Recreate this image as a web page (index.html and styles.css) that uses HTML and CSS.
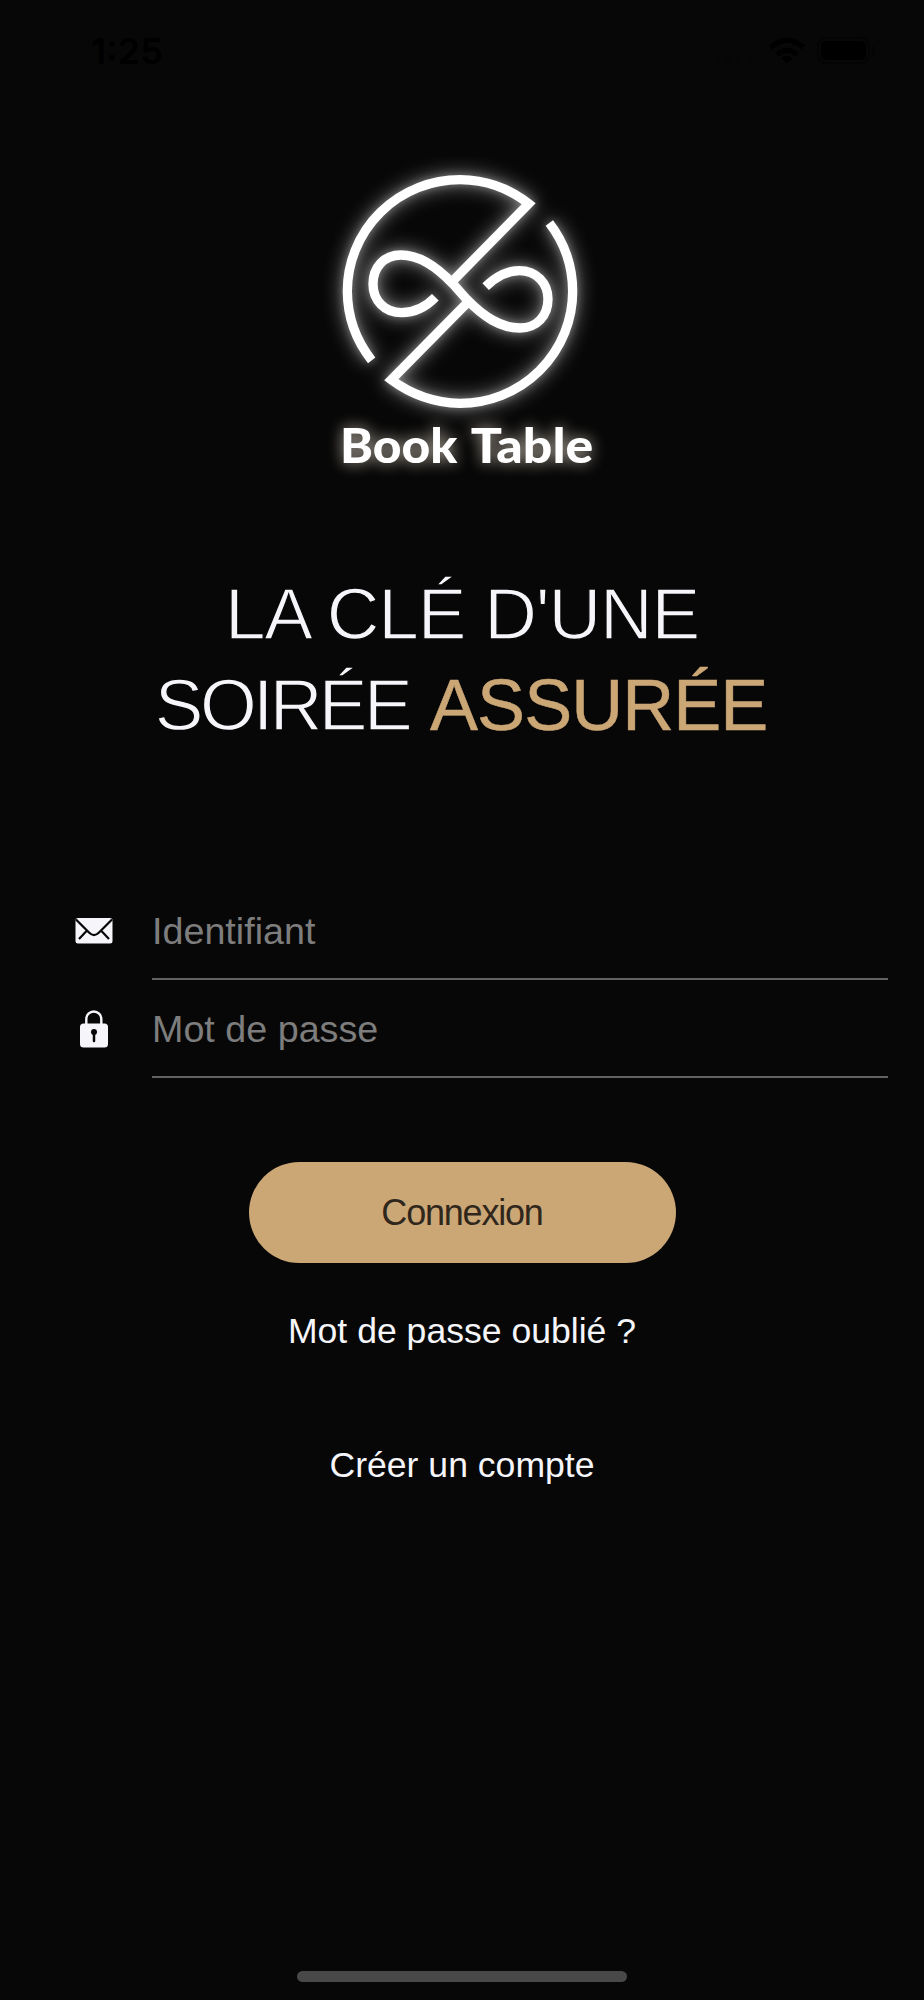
FILE: index.html
```html
<!DOCTYPE html>
<html lang="fr">
<head>
    <meta charset="UTF-8">
    <meta name="viewport" content="width=device-width, initial-scale=1.0">
    <title>Book Table</title>
    <link rel="stylesheet" href="styles.css">
</head>
<body>
    <header class="status-bar">
        <span class="time">1:25</span>
        <div class="status-icons">
            <svg class="signal" width="44" height="8" viewBox="0 0 44 8">
                <circle cx="4" cy="4" r="3"/><circle cx="15" cy="4" r="3"/><circle cx="26" cy="4" r="3"/><circle cx="37" cy="4" r="3"/>
            </svg>
            <svg class="wifi" width="38" height="27" viewBox="0 0 38 27">
                <path d="M19 26.500L13.500 21Q19 16.500 24.500 21Z"/>
                <path d="M9 17.500Q19 9 29 17.500M2.500 10.500Q19-4 35.500 10.500" fill="none" stroke="#000" stroke-width="5"/>
            </svg>
            <svg class="battery" width="60" height="27" viewBox="0 0 60 27">
                <rect x="1" y="1" width="51" height="25" rx="8" fill="none" stroke="#040404" stroke-width="2"/>
                <rect x="4" y="4" width="45" height="19" rx="5"/>
                <path d="M55 9q3 1.500 3 4.500t-3 4.500z" fill="#040404"/>
            </svg>
        </div>
    </header>

    <main class="login">
        <svg class="logo" viewBox="0 0 870 1020">
            <g class="emblem">
                <path d="M155 631A338 338 0 0 1 82 424A338 335 0 0 1 420 89A338 338 0 0 1 626 161L399 392"/>
                <path d="M688 219A338 338 0 0 1 758 424A338 336 0 0 1 420 760A360 360 0 0 1 214 689L444 456"/>
                <path d="M497 410C530 378 562 362 598 362C650 362 684 400 684 447C684 498 650 534 600 534C540 534 490 500 440 448L399 402C350 350 300 315 243 315C192 315 159 352 159 402C159 452 195 488 245 488C282 488 315 474 346 442"/>
            </g>
            <text class="brand" x="60" y="940" textLength="352" lengthAdjust="spacingAndGlyphs">Book</text>
            <text class="brand" x="452" y="940" textLength="368" lengthAdjust="spacingAndGlyphs">Table</text>
        </svg>

        <h1 class="title">
            <span class="line light first">LA CLÉ D'UNE</span>
            <span class="line"><span class="light second">SOIRÉE</span> <span class="gold">ASSURÉE</span></span>
        </h1>

        <form class="form">
            <label class="field">
                <svg width="38" height="38" viewBox="0 0 38 38">
                    <rect x="0.500" y="6" width="37" height="25.500" rx="2.500" fill="#f5f5fa"/>
                    <path d="M1 7.500L14 20.500Q19 25.500 24 20.500L37 7.500M12 18.500L4 27M26 18.500L34 27" fill="none" stroke="#070707" stroke-width="2.200"/>
                </svg>
                <input type="text" placeholder="Identifiant">
            </label>
            <label class="field">
                <svg width="38" height="38" viewBox="0 0 38 38">
                    <path d="M11.300 15V9a7.500 7.500 0 0 1 15 0v6" fill="none" stroke="#f5f5fa" stroke-width="2.400"/>
                    <rect x="5" y="13.500" width="28" height="24" rx="3.500" fill="#f5f5fa"/>
                    <circle cx="19" cy="22" r="3" fill="#070707"/>
                    <path d="M19 22v9" stroke="#070707" stroke-width="2.500" stroke-linecap="round"/>
                </svg>
                <input type="password" placeholder="Mot de passe">
            </label>
            <button class="submit" type="button">Connexion</button>
        </form>

        <a class="link">Mot de passe oublié ?</a>
        <a class="link create">Créer un compte</a>
    </main>

    <div class="home-bar"></div>
</body>
</html>
```
FILE: styles.css
```css
* {
    box-sizing: border-box;
}
body {
    display: flex;
    flex-direction: column;
    height: 2000px;
    margin: 0;
    overflow: hidden;
    background-color: #070707;
    color: #f5f5fa;
    font-family: "Liberation Sans", Arial, sans-serif;
}
.status-bar {
    display: flex;
    justify-content: space-between;
    height: 150px;
    padding: 31px 47px 0 91px;
    color: #000;
}
.time {
    font-family: Inter, sans-serif;
    font-size: 36px;
    font-weight: 600;
    line-height: 40px;
}
.status-icons {
    display: flex;
    align-items: flex-start;
    gap: 11px;
    padding-top: 6px;
}
.signal {
    margin-top: 19px;
    fill: #060606;
}
.login {
    display: flex;
    flex: 1;
    flex-direction: column;
    align-items: center;
}
.logo {
    width: 290px;
    height: 340px;
    margin-left: 6px;
}
.emblem {
    fill: none;
    stroke: #fff;
    stroke-width: 28;
    filter: drop-shadow(0 0 12px rgba(255, 255, 255, 0.35)) drop-shadow(0 0 28px rgba(255, 255, 255, 0.5));
}
.brand {
    fill: #fff;
    font-family: Lato, sans-serif;
    font-size: 145px;
    font-weight: 900;
    filter: drop-shadow(0 0 22px rgba(255, 244, 225, 0.7));
}
.title {
    margin: 78px 0 0;
    font-size: 72px;
    font-weight: 400;
    line-height: 91px;
    text-align: center;
    white-space: nowrap;
}
.line {
    display: block;
}
/* el borde del color del fondo afina las letras */
.light {
    font-size: 73px;
    -webkit-text-stroke: 1.3px #070707;
}
.first {
    letter-spacing: -1.2px;
}
.second {
    letter-spacing: -3.6px;
}
.gold {
    margin-left: 1px;
    margin-right: 2px;
    color: #cca776;
    letter-spacing: -1px;
    -webkit-text-stroke: 0.5px #cca776;
}
.form {
    display: flex;
    flex-direction: column;
    align-items: center;
    width: 100%;
    margin-top: 131px;
}
.field {
    display: flex;
    align-items: center;
    width: 100%;
    height: 98px;
    padding: 0 36px 0 75px;
}
.field input {
    flex: 1;
    height: 98px;
    margin-left: 39px;
    padding: 3px 0 0;
    border: 0;
    border-bottom: 2px solid #616161;
    outline: 0;
    background: none;
    font-family: inherit;
    font-size: 37.7px;
}
.field input::placeholder {
    color: #7d7d7d;
    opacity: 1;
}
.submit {
    width: 427px;
    height: 101px;
    margin-top: 84px;
    padding: 1px 0 0;
    border: 0;
    border-radius: 51px;
    background-color: #cca776;
    color: #30271c;
    font-family: inherit;
    font-size: 36px;
    letter-spacing: -1.2px;
}
.link {
    margin-top: 47px;
    font-size: 35.6px;
    line-height: 42px;
}
.create {
    margin-top: 92px;
}
.home-bar {
    width: 330px;
    height: 11px;
    margin: 0 auto 18px;
    border-radius: 6px;
    background-color: #484848;
}
```
